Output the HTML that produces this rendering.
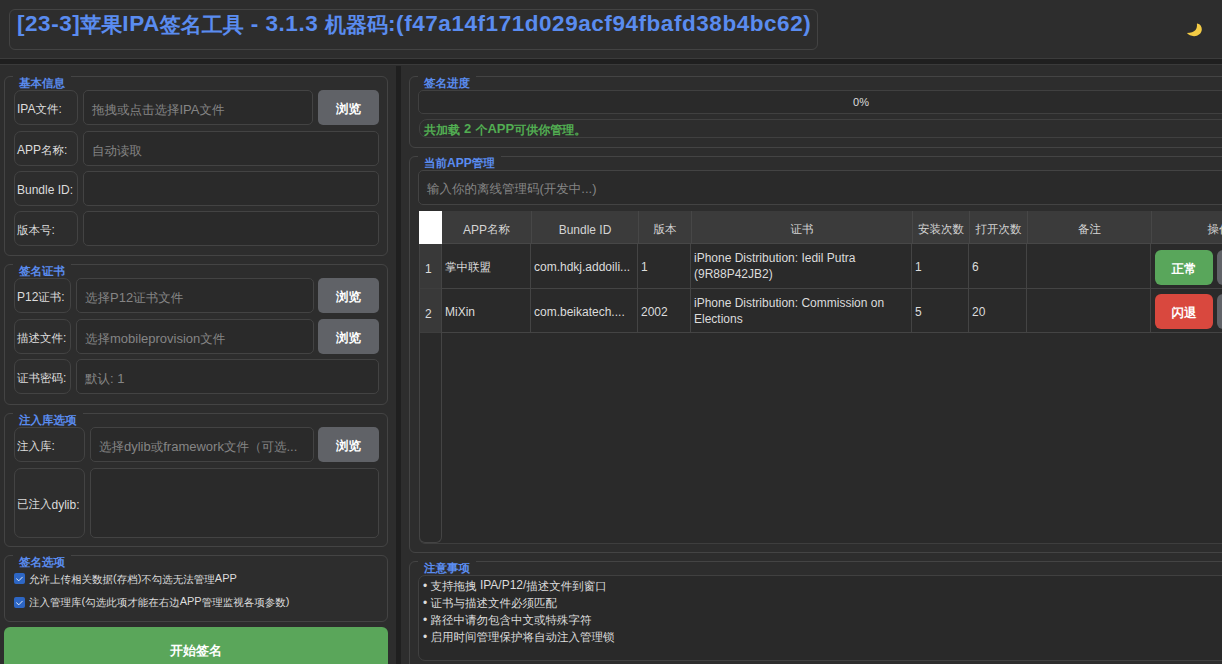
<!DOCTYPE html>
<html><head><meta charset="utf-8">
<style>
*{box-sizing:border-box;margin:0;padding:0}
html,body{width:1222px;height:664px;overflow:hidden;background:#2d2d2d;font-family:"Liberation Sans",sans-serif;color:#dcdcdc;font-size:12px}
.a{position:absolute}
.bx{position:absolute;border:1px solid #444;border-radius:6px}
.gb{position:absolute;border:1px solid #444;border-radius:6px}
.gt{position:absolute;background:#2d2d2d;color:#5a8cf0;font-weight:bold;font-size:12px;line-height:14px;padding:0 6px}
.lb{position:absolute;border:1px solid #434343;border-radius:7px;display:flex;align-items:center;padding:3px 0 0 2px;color:#dcdcdc;font-size:12px;white-space:nowrap}
.in{position:absolute;border:1px solid #434343;border-radius:5px;background:#2a2a2a;display:flex;align-items:center;padding:3px 0 0 8px;color:#858585;font-size:13px;white-space:nowrap;overflow:hidden}
.btn{position:absolute;background:#606267;border-radius:5px;color:#fff;font-weight:bold;font-size:13px;display:flex;align-items:center;justify-content:center;padding-top:1px}
.cb{position:absolute;width:11px;height:11px;background:#2d66c4;border-radius:2px}
.th{position:absolute;top:211px;height:33px;border-right:1px solid #474747;display:flex;align-items:center;justify-content:center;padding-top:4px;color:#d4d4d4;font-size:12px;white-space:nowrap}
.td{position:absolute;height:44px;display:flex;align-items:center;padding:2px 0 0 3px;color:#dcdcdc;font-size:12px;white-space:nowrap;overflow:hidden}
.nl{position:absolute;left:423px;height:17px;line-height:17px;font-size:12px;color:#dcdcdc;white-space:nowrap}
.bu{position:relative;top:1px}
.ct{position:absolute;font-size:11px;color:#dcdcdc;white-space:nowrap;line-height:12px}
.k{font-size:calc(100% - .5px);text-rendering:geometricPrecision;position:relative;top:1px}
.nk .k{font-size:100%;letter-spacing:0}
.gt .k{top:0}
.st .k{font-size:12px}.st{word-spacing:.5px}
.tt{letter-spacing:.55px}.tt .k{font-size:21px;letter-spacing:0}

</style></head><body>
<!-- header -->
<div class="a" style="left:0;top:0;width:1222px;height:59px;background:#2d2d2d;border-bottom:1px solid #3c3c3c"></div>
<div class="bx" style="left:9px;top:9px;width:809px;height:41px;border-color:#434343"></div>
<div class="a tt" style="left:17px;top:10px;font-size:22.5px;font-weight:bold;color:#5a8cf0;white-space:nowrap;line-height:28px">[23-3]<span class="k">苹果</span>IPA<span class="k">签名工具</span> - 3.1.3 <span class="k">机器码</span>:(f47a14f171d029acf94fbafd38b4bc62)</div>
<svg class="a" style="left:1184px;top:20px" width="20" height="20" viewBox="0 0 20 20"><path d="M13.3,3.6 C16.5,4.3 18,7 17.8,9.8 C17.5,13.6 14,16.3 10,16.2 C7,16.1 4.5,14.9 2.9,13.1 C6.8,12.9 9.8,12.2 11.5,10.1 C12.8,8.3 13.2,6 12.9,3.7 Z" fill="#f3cb45"/></svg>
<div class="a" style="left:0;top:59px;width:1222px;height:5px;background:#1f1f1f"></div>
<div class="a" style="left:0;top:64px;width:1222px;height:1px;background:#3a3a3a"></div>
<div class="a" style="left:396px;top:66px;width:5px;height:598px;background:#1f1f1f"></div>

<!-- LEFT PANEL -->
<div class="gb" style="left:4px;top:76px;width:384px;height:180px"></div>
<div class="gt" style="left:13px;top:76px"><span class="k">基本信息</span></div>
<div class="lb" style="left:14px;top:90px;width:64px;height:35px">IPA<span class="k">文件</span>:</div>
<div class="in" style="left:83px;top:90px;width:230px;height:35px"><span class="k">拖拽或点击选择</span>IPA<span class="k">文件</span></div>
<div class="btn" style="left:318px;top:90px;width:61px;height:35px"><span class="k">浏览</span></div>
<div class="lb" style="left:14px;top:131px;width:64px;height:35px">APP<span class="k">名称</span>:</div>
<div class="in" style="left:83px;top:131px;width:296px;height:35px"><span class="k">自动读取</span></div>
<div class="lb" style="left:14px;top:171px;width:64px;height:35px">Bundle ID:</div>
<div class="in" style="left:83px;top:171px;width:296px;height:35px"></div>
<div class="lb" style="left:14px;top:211px;width:64px;height:35px"><span class="k">版本号</span>:</div>
<div class="in" style="left:83px;top:211px;width:296px;height:35px"></div>

<div class="gb" style="left:4px;top:264px;width:384px;height:141px"></div>
<div class="gt" style="left:13px;top:264px"><span class="k">签名证书</span></div>
<div class="lb" style="left:14px;top:278px;width:57px;height:35px">P12<span class="k">证书</span>:</div>
<div class="in" style="left:76px;top:278px;width:238px;height:35px"><span class="k">选择</span>P12<span class="k">证书文件</span></div>
<div class="btn" style="left:318px;top:278px;width:61px;height:35px"><span class="k">浏览</span></div>
<div class="lb" style="left:14px;top:319px;width:57px;height:35px"><span class="k">描述文件</span>:</div>
<div class="in" style="left:76px;top:319px;width:238px;height:35px"><span class="k">选择</span>mobileprovision<span class="k">文件</span></div>
<div class="btn" style="left:318px;top:319px;width:61px;height:35px"><span class="k">浏览</span></div>
<div class="lb" style="left:14px;top:359px;width:57px;height:35px"><span class="k">证书密码</span>:</div>
<div class="in" style="left:76px;top:359px;width:303px;height:35px"><span class="k">默认</span>: 1</div>

<div class="gb" style="left:4px;top:413px;width:384px;height:134px"></div>
<div class="gt" style="left:13px;top:413px"><span class="k">注入库选项</span></div>
<div class="lb" style="left:14px;top:427px;width:71px;height:35px"><span class="k">注入库</span>:</div>
<div class="in" style="left:90px;top:427px;width:224px;height:35px"><span class="k">选择</span>dylib<span class="k">或</span>framework<span class="k">文件（可选</span>...</div>
<div class="btn" style="left:318px;top:427px;width:61px;height:35px"><span class="k">浏览</span></div>
<div class="lb" style="left:14px;top:468px;width:71px;height:70px"><span class="k">已注入</span>dylib:</div>
<div class="in" style="left:90px;top:468px;width:289px;height:70px"></div>

<div class="gb" style="left:4px;top:555px;width:384px;height:67px"></div>
<div class="gt" style="left:13px;top:555px"><span class="k">签名选项</span></div>
<div class="cb" style="left:14px;top:573px"><svg width="11" height="11" viewBox="0 0 11 11" style="position:absolute;left:0;top:0"><path d="M2.3,5.6 L4.8,7.8 L8.6,3.9" fill="none" stroke="#dce6f8" stroke-width="1"/></svg></div>
<div class="ct" style="left:29px;top:572px"><span class="k">允许上传相关数据</span>(<span class="k">存档</span>)<span class="k">不勾选无法管理</span>APP</div>
<div class="cb" style="left:14px;top:597px"><svg width="11" height="11" viewBox="0 0 11 11" style="position:absolute;left:0;top:0"><path d="M2.3,5.6 L4.8,7.8 L8.6,3.9" fill="none" stroke="#dce6f8" stroke-width="1"/></svg></div>
<div class="ct" style="left:29px;top:595px"><span class="k">注入管理库</span>(<span class="k">勾选此项才能在右边</span>APP<span class="k">管理监视各项参数</span>)</div>

<div class="btn" style="left:4px;top:627px;width:384px;height:45px;background:#5aa65a;font-size:13.5px;border-radius:6px;padding-top:0"><span class="k">开始签名</span></div>

<!-- RIGHT PANEL -->
<div class="gb" style="left:409px;top:76px;width:900px;height:72px"></div>
<div class="gt" style="left:418px;top:76px"><span class="k">签名进度</span></div>
<div class="a" style="left:418px;top:90px;width:886px;height:24px;border:1px solid #404040;border-radius:5px;background:#2a2a2a;text-align:center;line-height:22px;font-size:11px">0%</div>
<div class="a st" style="left:419px;top:119px;width:900px;height:19px;border:1px solid #404040;border-radius:8px;color:#52ae52;font-weight:bold;padding-left:4px;line-height:17px;font-size:13px"><span class="k">共加载</span> 2 <span class="k">个</span>APP<span class="k">可供你管理。</span></div>

<div class="gb" style="left:409px;top:156px;width:900px;height:397px"></div>
<div class="gt" style="left:418px;top:156px"><span class="k">当前</span>APP<span class="k">管理</span></div>
<div class="in" style="left:418px;top:170px;width:900px;height:35px;padding-top:2px"><span class="k">输入你的离线管理码</span>(<span class="k">开发中</span>...)</div>

<!-- TABLE -->
<div class="a" style="left:419px;top:211px;width:900px;height:333px;background:#2a2a2a;border:1px solid #3e3e3e;border-radius:6px"></div>
<div class="a" style="left:419px;top:244px;width:23px;height:299px;background:#2a2a2a;border:1px solid #444;border-top:0;border-radius:0 0 6px 6px"></div>
<div class="a" style="left:420px;top:244px;width:21px;height:44px;background:#393939"></div>
<div class="a" style="left:420px;top:289px;width:21px;height:43px;background:#393939"></div>
<div class="a" style="left:419px;top:211px;width:23px;height:33px;background:#fff"></div>
<div class="a" style="left:442px;top:211px;width:880px;height:33px;background:#3b3b3b;border-bottom:1px solid #474747"></div>
<div class="th" style="left:442px;width:90px">APP<span class="k">名称</span></div>
<div class="th" style="left:532px;width:107px">Bundle ID</div>
<div class="th" style="left:639px;width:53px"><span class="k">版本</span></div>
<div class="th" style="left:692px;width:221px"><span class="k">证书</span></div>
<div class="th" style="left:913px;width:57px"><span class="k">安装次数</span></div>
<div class="th" style="left:970px;width:58px"><span class="k">打开次数</span></div>
<div class="th" style="left:1028px;width:124px"><span class="k">备注</span></div>
<div class="th" style="left:1152px;width:135px"><span class="k">操作</span></div>
<div class="a" style="left:530px;top:244px;width:1px;height:89px;background:#444"></div>
<div class="a" style="left:637px;top:244px;width:1px;height:89px;background:#444"></div>
<div class="a" style="left:690px;top:244px;width:1px;height:89px;background:#444"></div>
<div class="a" style="left:911px;top:244px;width:1px;height:89px;background:#444"></div>
<div class="a" style="left:968px;top:244px;width:1px;height:89px;background:#444"></div>
<div class="a" style="left:1026px;top:244px;width:1px;height:89px;background:#444"></div>
<div class="a" style="left:1150px;top:244px;width:1px;height:89px;background:#444"></div>
<div class="a" style="left:442px;top:288px;width:880px;height:1px;background:#444"></div>
<div class="a" style="left:420px;top:288px;width:21px;height:1px;background:#3e3e3e"></div>
<div class="a" style="left:442px;top:332px;width:880px;height:1px;background:#444"></div>
<div class="a" style="left:420px;top:332px;width:21px;height:1px;background:#3e3e3e"></div>
<div class="td" style="left:420px;top:244px;width:21px;height:44px;padding:6px 0 0 5px">1</div>
<div class="td" style="left:442px;top:244px;width:88px"><span class="k">掌中联盟</span></div>
<div class="td" style="left:531px;top:244px;width:106px">com.hdkj.addoili...</div>
<div class="td" style="left:638px;top:244px;width:52px">1</div>
<div class="td" style="left:691px;top:244px;width:220px;line-height:16px;padding-top:0">iPhone Distribution: Iedil Putra<br>(9R88P42JB2)</div>
<div class="td" style="left:912px;top:244px;width:56px">1</div>
<div class="td" style="left:969px;top:244px;width:57px">6</div>
<div class="btn" style="left:1155px;top:250px;width:58px;height:35px;background:#59a65b;border-radius:6px"><span class="k">正常</span></div>
<div class="btn" style="left:1217px;top:250px;width:58px;height:35px;border-radius:6px"></div>
<div class="td" style="left:420px;top:289px;width:21px;height:44px;padding:6px 0 0 5px">2</div>
<div class="td" style="left:442px;top:289px;width:88px">MiXin</div>
<div class="td" style="left:531px;top:289px;width:106px">com.beikatech....</div>
<div class="td" style="left:638px;top:289px;width:52px">2002</div>
<div class="td" style="left:691px;top:289px;width:220px;line-height:16px;padding-top:0">iPhone Distribution: Commission on<br>Elections</div>
<div class="td" style="left:912px;top:289px;width:56px">5</div>
<div class="td" style="left:969px;top:289px;width:57px">20</div>
<div class="btn" style="left:1155px;top:294px;width:58px;height:35px;background:#d9483e;border-radius:6px"><span class="k">闪退</span></div>
<div class="btn" style="left:1217px;top:294px;width:58px;height:35px;border-radius:6px"></div>
<div class="gb" style="left:409px;top:561px;width:900px;height:120px"></div>
<div class="gt" style="left:418px;top:561px"><span class="k">注意事项</span></div>
<div class="a" style="left:418px;top:575px;width:900px;height:86px;border:1px solid #404040;border-radius:7px;background:#292929"></div>
<div class="nl" style="top:577px"><span class="bu">•</span> <span class="k">支持拖拽</span> IPA/P12/<span class="k">描述文件到窗口</span></div>
<div class="nl" style="top:594px"><span class="bu">•</span> <span class="k">证书与描述文件必须匹配</span></div>
<div class="nl" style="top:611px"><span class="bu">•</span> <span class="k">路径中请勿包含中文或特殊字符</span></div>
<div class="nl" style="top:628px"><span class="bu">•</span> <span class="k">启用时间管理保护将自动注入管理锁</span></div>
</body></html>
